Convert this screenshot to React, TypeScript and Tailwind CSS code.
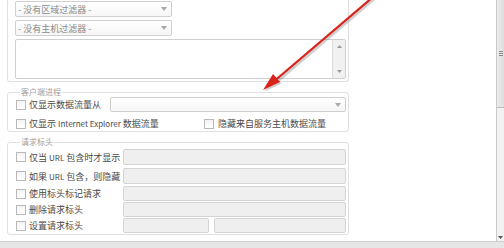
import React from "react";

const Cb = () => (
  <span className="inline-block w-[10px] h-[10px] border border-[#b9b9b9] bg-gradient-to-b from-[#f4f4f4] to-white shrink-0" />
);

const Caret = () => (
  <svg width="6" height="4" viewBox="0 0 6 4" className="shrink-0">
    <path d="M0 0 L6 0 L3 4 Z" fill="#a8a8a8" />
  </svg>
);

const Select = ({ text, cls }: { text?: string; cls: string }) => (
  <div
    className={`${cls} border border-[#cfcfcf] rounded-[2px] bg-gradient-to-b from-white to-[#f6f6f6] flex items-center justify-between pl-[2px] pr-[4px]`}
  >
    <span className="text-[9px] leading-none text-[#8a8a8a] whitespace-nowrap">{text}</span>
    <Caret />
  </div>
);

const Input = ({ cls }: { cls: string }) => (
  <div className={`${cls} h-full bg-[#efefef] border border-[#d4d4d4] rounded-[2px]`} />
);

const L = ({ children }: { children: React.ReactNode }) => (
  <span className="text-[8px]">{children}</span>
);

const HRow = ({ label, mt, h, split }: { label: React.ReactNode; mt: string; h: string; split?: boolean }) => (
  <div className={`flex items-stretch ${mt} ${h}`}>
    <div className="w-[107px] flex items-center gap-[3px] shrink-0">
      <Cb />
      <span className="text-[9px] leading-none text-[#4a4a4a] whitespace-nowrap">{label}</span>
    </div>
    {split ? (
      <div className="flex-1 flex gap-[5px]">
        <Input cls="w-[86px]" />
        <Input cls="flex-1" />
      </div>
    ) : (
      <Input cls="flex-1" />
    )}
  </div>
);

export default function App() {
  return (
    <div className="relative w-[504px] h-[248px] overflow-hidden bg-white font-['Noto_Sans_CJK_SC','Noto_Sans',sans-serif]">
      <div className="flex h-[241px]">
        <div className="w-[496px]">
          {/* Box 1 (top cut off) */}
          <div className="ml-[7px] w-[342px] h-[82px] border-x border-b border-[#e0e0e0] rounded-b-[3px] pl-[7px] pr-[2px] pt-[1px] flex flex-col gap-[3px]">
            <Select text="- 没有区域过滤器 -" cls="w-[157px] h-[16px]" />
            <Select text="- 没有主机过滤器 -" cls="w-[157px] h-[16px]" />
            <div className="h-[40px] border border-[#cfcfcf] rounded-[2px] bg-white flex justify-end">
              <div className="w-[13px] h-full bg-[#f1f1f1] border-l border-[#dcdcdc] flex flex-col items-center justify-between py-[5px]">
                <svg width="5" height="3" viewBox="0 0 5 3">
                  <path d="M0 3 L5 3 L2.5 0 Z" fill="#9a9a9a" />
                </svg>
                <svg width="5" height="3" viewBox="0 0 5 3">
                  <path d="M0 0 L5 0 L2.5 3 Z" fill="#9a9a9a" />
                </svg>
              </div>
            </div>
          </div>

          {/* Box 2 */}
          <fieldset className="mt-[5px] ml-[7px] w-[342px] border border-[#e0e0e0] rounded-[3px] pl-[8px] pr-[2px]">
            <legend className="ml-[4px] px-[1px] text-[8px] leading-[10px] text-[#a0a0a0]">客户端进程</legend>
            <div className="flex items-stretch h-[15px]">
              <div className="w-[94px] flex items-center gap-[3px] shrink-0">
                <Cb />
                <span className="text-[9px] leading-none text-[#4a4a4a] whitespace-nowrap">仅显示数据流量从</span>
              </div>
              <Select cls="flex-1 h-full" />
            </div>
            <div className="flex items-center mt-[4px] h-[15px]">
              <div className="w-[188px] flex items-center gap-[3px] shrink-0">
                <Cb />
                <span className="text-[9px] leading-none text-[#4a4a4a] whitespace-nowrap">
                  仅显示 <L>Internet Explorer</L> 数据流量
                </span>
              </div>
              <div className="flex items-center gap-[4px]">
                <Cb />
                <span className="text-[9px] leading-none text-[#4a4a4a] whitespace-nowrap">隐藏来自服务主机数据流量</span>
              </div>
            </div>
          </fieldset>

          {/* Box 3 */}
          <fieldset className="mt-[5px] ml-[7px] w-[342px] border border-[#e0e0e0] rounded-[3px] pl-[8px] pr-[2px] pb-[1px]">
            <legend className="ml-[4px] px-[1px] text-[8px] leading-[10px] text-[#a0a0a0]">请求标头</legend>
            <HRow label={<>仅当 <L>URL</L> 包含时才显示</>} mt="mt-[2px]" h="h-[16px]" />
            <HRow label={<>如果 <L>URL</L> 包含，则隐藏</>} mt="mt-[3px]" h="h-[16px]" />
            <HRow label="使用标头标记请求" mt="mt-[2px]" h="h-[15px]" />
            <HRow label="删除请求标头" mt="mt-[1px]" h="h-[15px]" />
            <HRow label="设置请求标头" mt="mt-[1px]" h="h-[15px]" split />
          </fieldset>
        </div>

        {/* Right scrollbar */}
        <div className="w-[8px] h-full border-l border-[#c9c9c9] flex flex-col">
          <div className="h-[108px] bg-gradient-to-r from-[#ececec] to-[#dedede] border-b border-[#bdbdbd] flex flex-col items-center justify-center gap-[1px] pl-[1px]">
            <span className="block w-[4px] h-[1px] bg-[#8a8a8a]" />
            <span className="block w-[4px] h-[1px] bg-[#8a8a8a]" />
            <span className="block w-[4px] h-[1px] bg-[#8a8a8a]" />
          </div>
          <div className="flex-1 bg-[#f2f2f2] flex flex-col justify-end items-center pb-[2px]">
            <svg width="5" height="3" viewBox="0 0 5 3">
              <path d="M0 0 L5 0 L2.5 3 Z" fill="#555" />
            </svg>
          </div>
        </div>
      </div>

      {/* Bottom band */}
      <div className="h-[7px] border-t border-[#cfcfcf] bg-[#e6e6e6]" />

      {/* Red annotation arrow */}
      <svg
        className="absolute left-0 top-0 pointer-events-none"
        width="504"
        height="248"
        viewBox="0 0 504 248"
      >
        <g opacity="0.35" transform="translate(1.5 1.5)">
          <line x1="373" y1="-3" x2="272" y2="83" stroke="#777" strokeWidth="3" />
          <polygon points="263,90 280,82 273,74" fill="#777" />
        </g>
        <line x1="373" y1="-3" x2="272" y2="83" stroke="#d9231b" strokeWidth="2.2" strokeLinecap="round" />
        <polygon points="263,90 280,82 273,74" fill="#d9231b" />
      </svg>
    </div>
  );
}
